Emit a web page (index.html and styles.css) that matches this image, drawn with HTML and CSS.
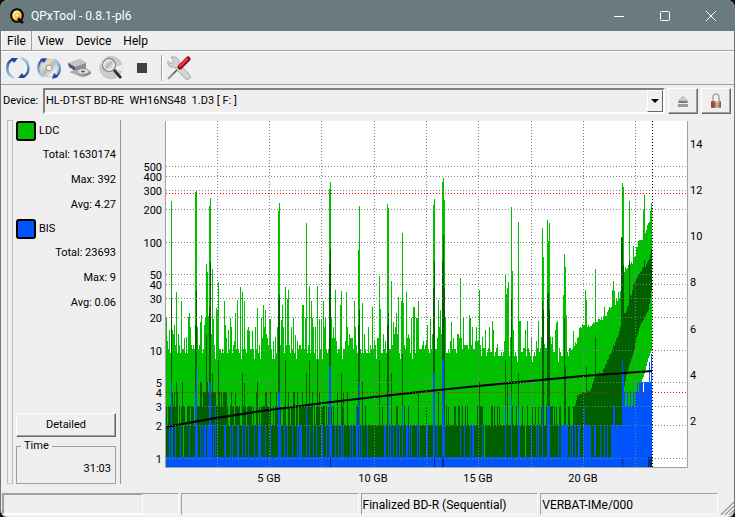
FILE: index.html
```html
<!DOCTYPE html>
<html lang="en">
<head>
<meta charset="utf-8">
<title>QPxTool - 0.8.1-pl6</title>
<link rel="stylesheet" href="styles.css">
</head>
<body>
<div class="window">
  <header class="titlebar">
    <svg class="app-icon" viewBox="0 0 16 16" aria-hidden="true">
      <defs><linearGradient id="q" x2="1" y2="1"><stop stop-color="#fff"/><stop offset=".45" stop-color="#ffe060"/><stop offset="1" stop-color="#f47b10"/></linearGradient></defs>
      <ellipse cx="8" cy="7.5" rx="5.8" ry="6.3" fill="url(#q)" stroke="#080808" stroke-width="2"/>
      <circle cx="8" cy="7.2" r="1.8" fill="#fff3c0" stroke="#c99a40" stroke-width=".6"/>
      <path d="M9 10.5 L14 15" stroke="#080808" stroke-width="2.8"/>
    </svg>
    <h1>QPxTool - 0.8.1-pl6</h1>
    <div class="caption">
      <button aria-label="Minimize"><svg viewBox="0 0 10 10"><path d="M0 5.5h10"/></svg></button>
      <button aria-label="Maximize"><svg viewBox="0 0 10 10"><rect x=".5" y=".5" width="9" height="9" rx="1"/></svg></button>
      <button aria-label="Close"><svg viewBox="0 0 10 10"><path d="M0 0 10 10M10 0 0 10"/></svg></button>
    </div>
  </header>
  <nav class="menubar">
    <button class="active">File</button><button>View</button><button>Device</button><button>Help</button>
  </nav>
  <div class="toolbar">
    <button aria-label="Rescan"><svg viewBox="0 0 24 24">
      <defs><linearGradient id="b" x2="0" y2="1"><stop stop-color="#2345a0"/><stop offset="1" stop-color="#a9d2f4"/></linearGradient><linearGradient id="b2" x2="0" y2="1"><stop stop-color="#a9d2f4"/><stop offset="1" stop-color="#2345a0"/></linearGradient></defs>
      <path d="M8 3C-1 6-1 18 8 22" fill="none" stroke="url(#b)" stroke-width="2.4"/><path d="M5 2h7l-4 5z" fill="#2345a0"/>
      <path d="M15 2c9 3 10 15 2 19" fill="none" stroke="url(#b2)" stroke-width="2.4"/><path d="M19 22h-7l4-5z" fill="#2345a0"/>
    </svg></button>
    <button aria-label="Update media info"><svg viewBox="0 0 24 24">
      <defs><linearGradient id="d" x2="1" y2="1"><stop stop-color="#9ad0dc"/><stop offset=".3" stop-color="#e8dfc0"/><stop offset=".5" stop-color="#b8b8b8"/><stop offset=".75" stop-color="#eee"/><stop offset="1" stop-color="#aaa"/></linearGradient></defs>
      <circle cx="12" cy="12" r="9" fill="url(#d)" stroke="#aaa" stroke-width=".6"/><circle cx="12" cy="12" r="3" fill="#eee" stroke="#999"/>
      <path d="M7 3C0 6-1 17 7 21" fill="none" stroke="url(#b)" stroke-width="2.2"/><path d="M3 3l7-1-3 5z" fill="#2345a0"/>
      <path d="M17 3c7 4 8 14 1 18" fill="none" stroke="url(#b2)" stroke-width="2.2"/><path d="M21 21l-6 2 2-6z" fill="#2345a0"/>
    </svg></button>
    <button aria-label="Drive"><svg viewBox="0 0 24 24">
      <path d="M0 7 12 3l6 4v6l-6 3L1 11z" fill="#8b8d91"/><path d="M0 7 12 3l6 4-11 4z" fill="#c3c5c9"/><path d="M0 7l7 4v4l-6-4z" fill="#4b5878"/>
      <path d="M2 16l13-4 8 4-8 5z" fill="#b0b0b0" stroke="#909090" stroke-width=".6"/><ellipse cx="15" cy="15.5" rx="6" ry="3" fill="#ddd" stroke="#888"/><ellipse cx="15" cy="15.5" rx="1.8" ry="1" fill="#555"/><path d="M17 18l6-2v2l-7 3z" fill="#888"/>
    </svg></button>
    <button aria-label="Scan"><svg viewBox="0 0 24 24">
      <circle cx="12" cy="11.5" r="11.3" fill="#ccc" stroke="#b4b4b4" stroke-width=".5"/><path d="M12 12 1 8A12 12 0 0 1 8 1z" fill="#e8e8e8"/><path d="M12 12l11-3a12 12 0 0 1 0 6z" fill="#eee"/>
      <circle cx="10" cy="9" r="6.5" fill="url(#d)" stroke="#888" stroke-width="1.4"/><circle cx="10" cy="9" r="5.2" fill="none" stroke="#fff" stroke-width=".8"/><path d="M15 14l7 8" stroke="#333" stroke-width="2.8"/>
    </svg></button>
    <button aria-label="Stop"><svg viewBox="0 0 24 24"><rect x="7" y="7" width="10" height="10" fill="#414141"/></svg></button>
    <span class="separator"></span>
    <button aria-label="Preferences"><svg viewBox="0 0 24 24">
      <path d="M2 22 13 11" stroke="#555" stroke-width="1.6"/><path d="M1 23l5-5" stroke="#999" stroke-width="2"/>
      <path d="M4 1l3 4-3 3-3-3c-1 4 2 7 6 6l10 10c1 2 3 3 5 2s2-3 0-5L12 8c1-5-3-8-8-7z" fill="#d4d4d4" stroke="#909090" stroke-width=".7"/>
      <path d="M13 11 21 3" stroke="#8e0c14" stroke-width="5" stroke-linecap="round"/><path d="M13 10 20 3" stroke="#ed3544" stroke-width="2.6" stroke-linecap="round"/>
    </svg></button>
  </div>
  <div class="device-row">
    <label for="device">Device:</label>
    <div class="combo">
      <select id="device"><option>HL-DT-ST BD-RE &nbsp;WH16NS48 &nbsp;1.D3 [ F: ]</option></select>
      <span class="arrow" aria-hidden="true"></span>
    </div>
    <button class="raised" aria-label="Eject"><svg viewBox="0 0 12 16"><path d="M6 3 11 8H1z" fill="#ccc" stroke="#aaa" stroke-width=".6"/><path d="M2 8h8l1 2H1z" fill="#777"/><path d="M1 11h10v3H1z" fill="#999"/></svg></button>
    <button class="raised" aria-label="Lock"><svg viewBox="0 0 12 16">
      <defs><linearGradient id="l"><stop stop-color="#974b32"/><stop offset=".3" stop-color="#a75a3d"/><stop offset=".6" stop-color="#f1d8b8"/><stop offset="1" stop-color="#7c5943"/></linearGradient></defs>
      <path d="M3 9V4c0-4 6-4 6 0v5" fill="none" stroke="#aaa" stroke-width="1.6"/><rect x="1" y="8" width="10" height="7" rx="1" fill="url(#l)"/><path d="M1 11h10M1 13h10" stroke="#70402c" stroke-width=".5"/>
    </svg></button>
  </div>
  <main class="content">
    <div class="handle"></div>
    <aside class="panel">
      <section><h2><i class="swatch ldc"></i>LDC</h2><p>Total: 1630174</p><p>Max: 392</p><p>Avg: 4.27</p></section>
      <section><h2><i class="swatch bis"></i>BIS</h2><p>Total: 23693</p><p>Max: 9</p><p>Avg: 0.06</p></section>
      <button class="raised detailed">Detailed</button>
      <fieldset><legend>Time</legend>31:03</fieldset>
    </aside>
    <svg class="chart" id="chart" viewBox="121 115 613 378" preserveAspectRatio="xMinYMin" role="img" aria-label="LDC and BIS error rates"></svg>
  </main>
  <footer class="statusbar">
    <span><i class="progress"></i></span><span></span><span>Finalized BD-R (Sequential)</span><span>VERBAT-IMe/000</span>
    <svg class="grip" viewBox="0 0 14 14"><path d="M1 14 14 1M5 14l9-9M9 14l5-5" stroke="#999" stroke-width="1.4"/><path d="M3 14 14 3M7 14l7-7" stroke="#fff"/></svg>
  </footer>
</div>
<script src="chart.js"></script>
</body>
</html>
```
FILE: styles.css
```css
* { box-sizing: border-box; }
body {
  margin: 0;
  background: #160b0e;
  color: #000;
  font: 11px/14px Roboto, sans-serif;
}
button, select { font: inherit; color: inherit; }
button { border: 0; padding: 0; background: none; }
svg { display: block; }
.window {
  min-height: 100vh;
  display: flex;
  flex-direction: column;
  background: #efefef;
  border: 1px solid #6a7a7e;
  border-top: 0;
  border-radius: 8px;
  overflow: hidden;
}
.titlebar {
  height: 31px;
  display: flex;
  align-items: center;
  padding-left: 8px;
  background: #6a7a7e;
  color: #fff;
}
.app-icon { width: 16px; height: 16px; }
.titlebar h1 { flex: 1; margin: 0 0 0 6px; font: 12px/16px Roboto, sans-serif; }
.caption { display: flex; align-self: stretch; }
.caption button { width: 46px; display: grid; place-items: center; }
.caption svg { width: 10px; height: 10px; fill: none; stroke: #fff; overflow: visible; }
.menubar {
  display: flex;
  height: 20px;
  font-size: 12px;
  border-bottom: 1px solid #a0a0a0;
}
.menubar button { padding: 0 5px; border: 1px solid transparent; border-width: 0 1px; }
.menubar .active { border-color: #fff #a0a0a0 #a0a0a0 #fff; }
.toolbar {
  display: flex;
  align-items: center;
  gap: 7px;
  height: 34px;
  padding-left: 5px;
  border-top: 1px solid #fff;
  border-bottom: 1px solid #a0a0a0;
}
.toolbar svg { width: 24px; height: 24px; }
.separator { width: 2px; height: 26px; margin: 0 -3px 0 0; border-left: 1px solid #a0a0a0; border-right: 1px solid #fff; }
.device-row {
  display: flex;
  align-items: center;
  gap: 3px;
  padding: 3px 3px 1px 2px;
}
.device-row label { width: 37px; }
.combo {
  position: relative;
  flex: 1;
  height: 26px;
  border: 2px solid;
  border-color: #808080 #fff #fff #808080;
}
.combo select {
  appearance: none;
  width: 100%;
  height: 100%;
  padding: 0 20px 0 1px;
  border: 0;
  border-radius: 0;
  background: none;
}
.arrow {
  position: absolute;
  right: 0;
  top: 0;
  bottom: 0;
  width: 16px;
  border: 1px solid;
  border-color: #fff #696969 #696969 #fff;
  display: grid;
  place-items: center;
  pointer-events: none;
}
.arrow::after { content: ""; border: 4px solid transparent; border-top-color: #000; border-bottom: 0; }
.raised {
  display: grid;
  place-items: center;
  border: 1px solid;
  border-color: #fff #696969 #696969 #fff;
  box-shadow: inset -1px -1px #a0a0a0;
}
.device-row .raised { width: 30px; height: 26px; }
.device-row .raised svg { height: 16px; width: 12px; }
.content {
  flex: 1;
  display: flex;
}
.handle {
  width: 6px;
  margin: 5px 3px 9px 6px;
  border: 1px solid #bbb;
  border-bottom-color: #ccc;
}
.panel {
  width: 105px;
  margin: 5px 0 9px;
  padding-right: 4px;
  display: flex;
  flex-direction: column;
  border-right: 1px solid #999;
}
.panel section { height: 98px; }
.panel h2 { display: flex; align-items: center; gap: 3px; height: 21px; margin: 0; font: inherit; }
.swatch { width: 20px; height: 20px; border: 2px solid #000; border-radius: 3px; }
.ldc { background: #00c000; }
.bis { background: #0055ff; }
.panel p { margin: 0; height: 25px; line-height: 28px; text-align: right; }
.detailed { height: 24px; margin-top: auto; }
.panel fieldset {
  margin: 2px 0 0;
  height: 45px;
  padding: 9px 4px 0 0;
  border: 1px solid #a0a0a0;
  text-align: right;
}
.panel legend { margin-left: 4px; padding: 0 3px; text-align: left; }
.chart { flex: 1; min-width: 0; height: 378px; }
.chart text { font: 11px Roboto, sans-serif; }
.statusbar {
  display: flex;
  gap: 2px;
  height: 24px;
  padding: 0 0 2px 1px;
}
.statusbar span {
  flex: 1;
  padding: 4px 0 0 1px;
  font-size: 12px;
  border: 1px solid;
  border-color: #a0a0a0 #fff #fff #a0a0a0;
}
.statusbar span:first-child { padding: 0; }
.progress { display: block; width: 80%; height: 100%; border: 1px solid; border-color: #a0a0a0 #fff #fff #a0a0a0; }
.grip { width: 14px; height: 14px; align-self: flex-end; }
```
FILE: chart.js
```js
const LEFT = 166, RIGHT = 687, TOP = 121, BOTTOM = 467, END = 652;
const levelY = v => Math.round(457.5 - 108 * Math.log10(v));
let out = `<rect x="165" y="121" width="522" height="346" fill="#fff"/>`;

// Piecewise-linear lookup over [x, y, x, y, ...]
const along = (p, x) => {
  for (let i = 0; i < p.length - 2; i += 2)
    if (x >= p[i] && x <= p[i + 2]) return Math.round(p[i + 1] + (p[i + 3] - p[i + 1]) * (x - p[i]) / (p[i + 2] - p[i]));
};
const bars = (tops, color, bottom = () => BOTTOM) => {
  let d = "";
  for (const x in tops) { const b = bottom(+x); if (b > tops[x]) d += `M${x} ${tops[x]}h1V${b}h-1z`; }
  out += `<path d="${d}" fill="${color}" shape-rendering="crispEdges"/>`;
};
const put = (o, s) => s.trim().split(/\s+/).forEach(p => { const [x, y] = p.split(",").map(Number); o[x] = y; });
let seed = 71;
const rand = () => (seed = (seed * 16807) % 2147483647) / 2147483647;

const ldc = {}, base = [318, 327, 334, 338, 341, 345, 345, 349, 349, 349, 353, 353, 353, 359];
for (let x = LEFT; x < END; x++) {
  if (x < 570) ldc[x] = base[Math.floor(rand() * base.length)] + (x > 480 ? 3 : 0);
  else ldc[x] = along([570, 349, 576, 343, 580, 326, 592, 325, 602, 319, 610, 308, 619, 297, 624, 270, 633, 262, 638, 241, 642, 238, 648, 225, 652, 210], x) + Math.floor(rand() * 5) - 2;
}
put(ldc, `169,330 172,330 174,325 178,334 186,337 188,317 189,313 200,322 201,315 204,325 205,317 208,316 213,319 217,310 225,325 228,330 235,313 247,330 249,331 252,331 265,310 269,319 270,319 275,337 281,320 291,327 295,335 305,318 315,327 319,319 321,319
171,201 176,292 181,301 195,192 196,191 206,264 207,272 209,206 210,198 212,269 216,308 218,282 224,301 237,300 240,287 242,292 244,301 257,308 263,305 278,211 279,203 282,305 285,287 287,299 288,290 302,305 303,305 306,223 309,286 311,301 317,286 323,301
329,189 330,182 335,290 340,305 341,291 346,292 354,301 358,250 359,206 362,303 372,307 379,276 380,309 387,204 388,208 391,281 393,322 396,313 398,297 401,301 402,233 403,303 406,292 413,307 414,307 418,301 427,325 430,319
433,205 434,199 438,300 440,310 442,182 443,178 444,200 451,322 460,278 469,315 479,290 489,327 493,330 505,274 506,294 507,288 508,282 511,207 512,271 513,330 518,222 542,228 543,257 547,220 548,241 549,223 556,323 563,295 564,254 565,267 566,315 573,331
585,290 586,300 595,269 604,307 611,307 612,290 613,281 614,291 615,305 616,298 618,292 620,291 621,252 622,183 623,187 629,201 633,246 643,209 644,195 645,233 650,211 651,203`);
const edge = [622, 425, 623, 392, 626, 375, 630, 362, 634, 350, 636, 338, 640, 325, 644, 318, 648, 310, 652, 285];
const lower = x => x < 641 ? BOTTOM : along([641, 382, 644, 374, 648, 358, 652, 348], x);
bars(ldc, "#00c000", lower);

const dark = {};
for (let x = LEFT; x < END; x++) {
  const r = rand();
  dark[x] = 425;
  if (x < 252) dark[x] = x > 198 && x < 228 ? (r < .75 ? 392 : 406) : (r < .65 ? 406 : r < .75 ? 392 : 425);
  else if (x < 350) dark[x] = r < .48 ? 406 : r < .6 ? 392 : 425;
  else if (x < 500) dark[x] = r < .22 ? 406 : 425;
  else if (x < 574) dark[x] = r < .3 ? 406 : 425;
  else dark[x] = along([574, 406, 577, 393, 590, 390, 595, 374, 602, 371, 608, 356, 614, 343, 619, 331, 622, 315, 628, 304, 634, 280, 640, 271, 648, 259, 652, 245], x) + Math.floor(r * 4);
}
put(dark, `171,298 176,382 182,382 195,325 196,291 200,382 201,382 206,335 207,382 209,307 210,262 212,373 218,360 242,373 244,382 257,382 278,300 279,295 285,360 306,373 309,360 317,360 329,264 330,249 341,373 358,325 359,310 362,382 379,360 387,325 388,313 391,373 402,354 418,392 433,288 434,261 438,392 442,261 443,235 444,288 479,382 505,360 507,382 511,299 518,373 542,301 543,310 547,295 548,292 549,310 564,318 565,367 586,367 595,337 621,237 622,238 623,265 629,261 644,260`);
bars(dark, "#006000", x => x < 623 ? BOTTOM : along(edge, x));

const bis = {};
for (let x = LEFT; x < END; x++) bis[x] = 457;
`169 171-172 175 180 189 195-197 200 202 204-205 207-211 213 217 224-225 230 232 237-238 242 245 248 254 258-260 265 270 278-280 284 287 292 297 299-301 306 309 313 316 321-322 326 329-331 335 338 341 343 350 352 356-357 359 361 367 384-385 388 390 393 396 399 402 406-407 409 411 417 419 426-427 433-434 437 442-444 460 464 470 472-473 482 505 511 518-519 531 536 538 542 547-549 558 561-567 570 572 575 578-579 583-590 594-595 600 604 607 611-651`
  .split(" ").forEach(r => { const [a, b = a] = r.split("-"); for (let x = +a; x <= +b; x++) bis[x] = 425; });
for (let x = 622; x < END; x++) bis[x] = x < 635 ? (x % 3 ? 406 : 392) : x < 637 ? 392 : x % 5 === 3 && x < 648 ? 392 : 382;
put(bis, `171,382 195,392 196,366 209,382 210,382 278,392 279,392 215,406 306,406 329,366 330,366 356,406 359,382 388,392 402,406 433,373 434,373 442,360 443,360 444,425 505,406 511,393 518,406 542,406 547,406 548,406 549,406 584,406 613,406 614,406 622,360 623,373 649,362 651,354`);
bars(bis, "#0055ff");
[[330, 1], [434, 1], [442, 2], [622, 1], [648, 4]].forEach(([x, w]) => out += `<rect x="${x}" y="457" width="${w}" height="10" fill="#002b80"/>`);
out += `<path d="M183.5 425V457M525.5 425V457M484.5 425V457" stroke="#00c000"/>`;

// Reading speed curve
out += `<path d="M166 427Q217 417 269 410T374 397T478 386T583 376L652 371" fill="none" stroke="#000" stroke-width="2.2"/>`;

const line = (x1, y1, x2, y2, c) => out += `<path d="M${x1} ${y1}L${x2} ${y2}" stroke="${c}" stroke-dasharray="1 2" shape-rendering="crispEdges"/>`;
const label = (x, y, t, a) => out += `<text x="${x}" y="${y}" text-anchor="${a}">${t}</text>`;
[1, 2, 3, 4, 5, 10, 20, 30, 40, 50, 100, 200, 300, 400, 500].forEach(v => {
  const y = levelY(v);
  line(LEFT, y + .5, RIGHT, y + .5, v === 4 ? "#f00" : "#808080");
  label(162, y + 5, v, "end");
});
line(LEFT, 193.5, RIGHT, 193.5, "#f00");
[217, 269, 321, 374, 426, 478, 531, 583, 635].forEach(x => line(x + .5, TOP, x + .5, BOTTOM, "#808080"));
line(652.5, TOP, 652.5, BOTTOM, "#000");
[[269, 5], [373, 10], [478, 15], [583, 20]].forEach(([x, v]) => label(x, 482, v + " GB", "middle"));
[[2, 425], [4, 379], [6, 333], [8, 286], [10, 240], [12, 194], [14, 148]].forEach(([v, y]) => label(690, y, v, "start"));
out += `<path d="M165.5 121V467.5H687.5V121" fill="none" stroke="#a0a0a0"/>`;
document.getElementById("chart").innerHTML = out;
```
